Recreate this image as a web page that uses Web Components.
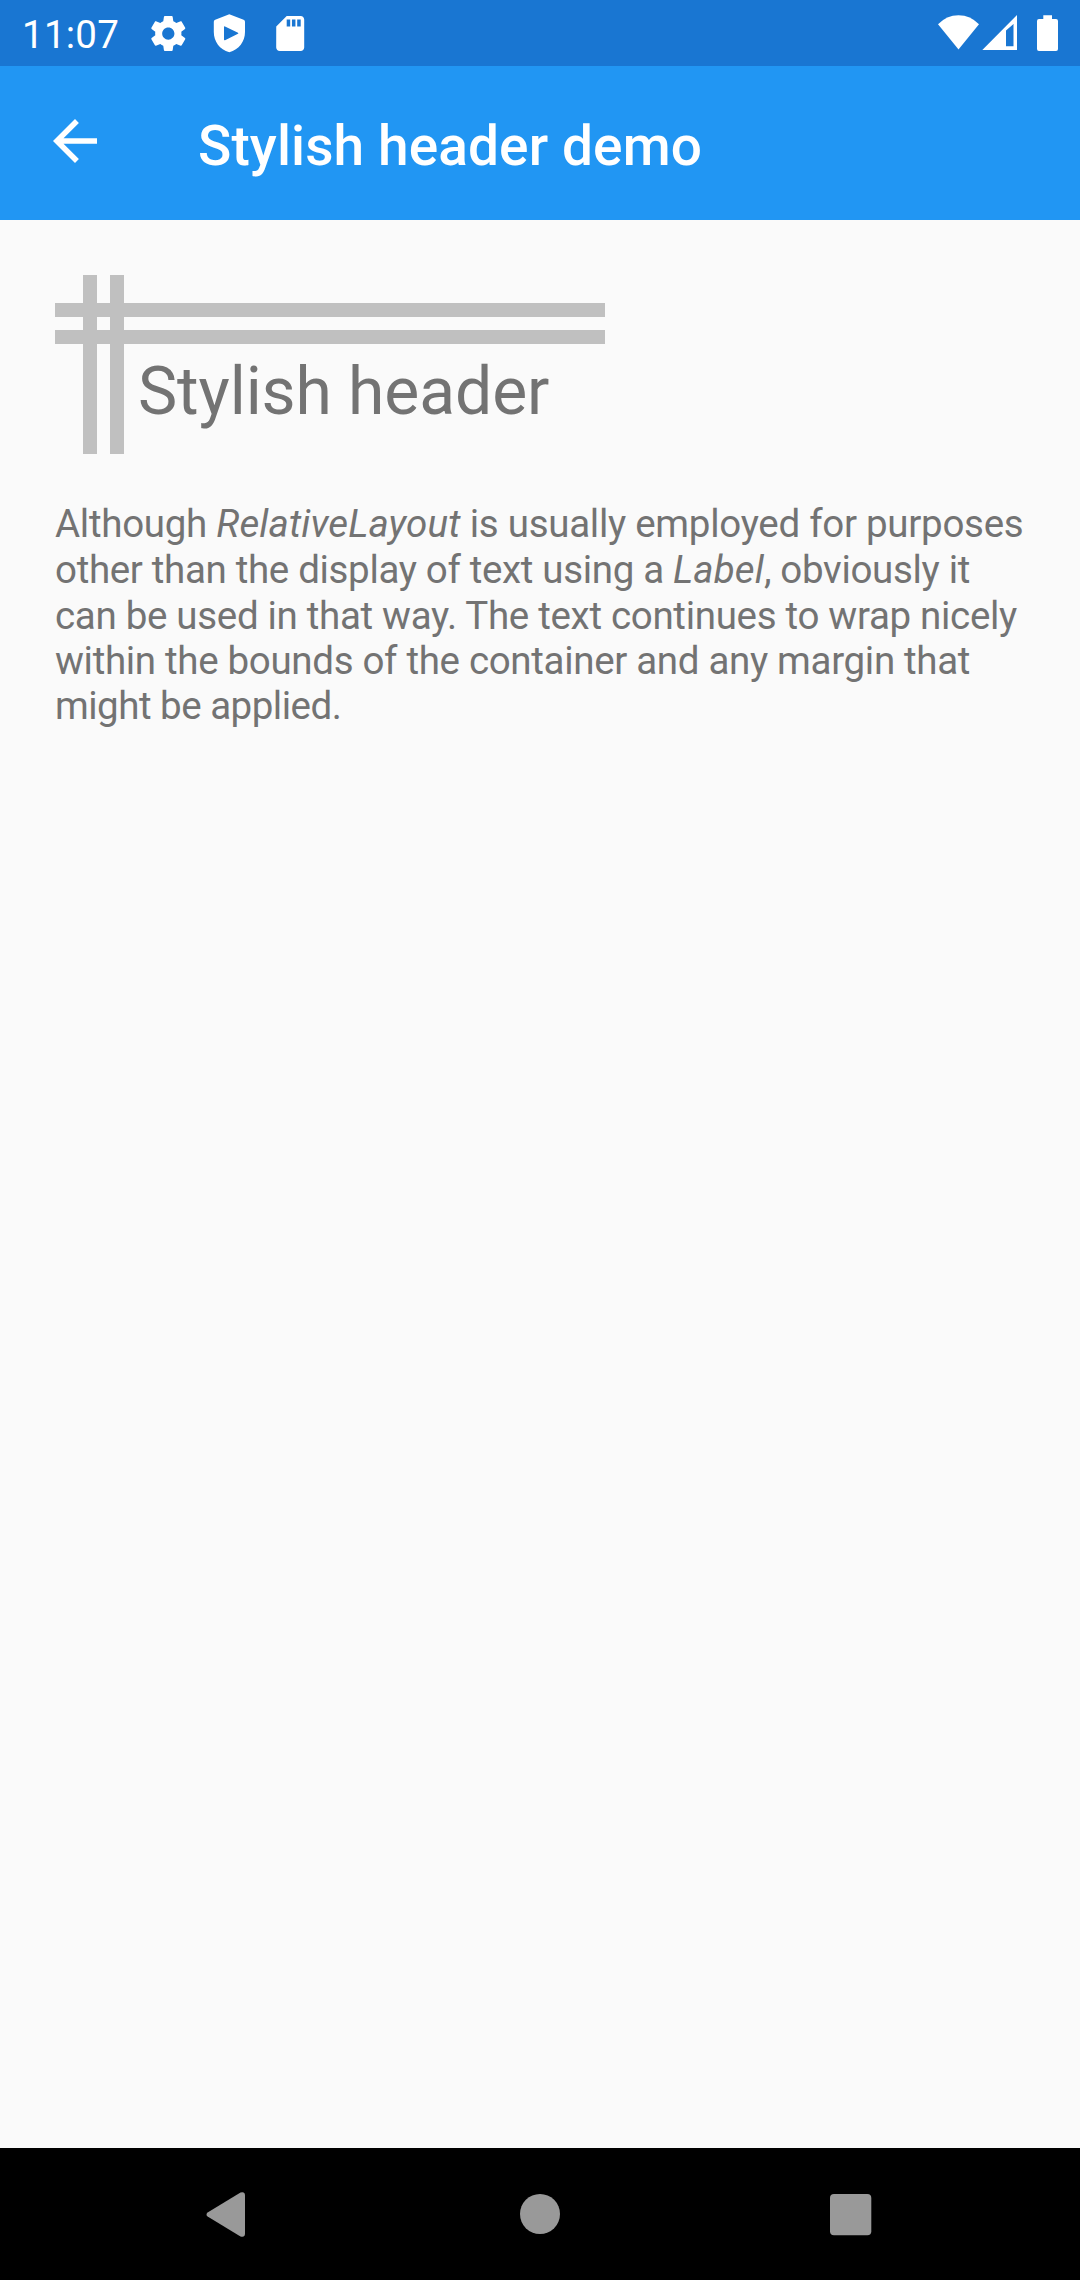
<!DOCTYPE html>
<html lang="en">
<head>
<meta charset="utf-8">
<title>Stylish header demo</title>
<style>
html,body{margin:0;height:100%}
body{font-family:Roboto,sans-serif;background:#fafafa}
text-line i{letter-spacing:.1px}
</style>
</head>
<body>
<demo-screen>
  <status-bar slot="status" time="11:07"></status-bar>
  <app-bar slot="bar">Stylish header demo</app-bar>
  <stylish-header>Stylish header</stylish-header>
  <body-label>
    <text-line style="height:46px;letter-spacing:-.28px">Although <i>RelativeLayout</i> is usually employed for purposes</text-line>
    <text-line style="height:46px;letter-spacing:-.33px">other than the display of text using a <i>Label</i>, obviously it</text-line>
    <text-line style="letter-spacing:-.31px">can be used in that way. The text continues to wrap nicely</text-line>
    <text-line style="letter-spacing:-.32px">within the bounds of the container and any margin that</text-line>
    <text-line style="letter-spacing:-.5px">might be applied.</text-line>
  </body-label>
  <nav-bar slot="nav"></nav-bar>
</demo-screen>
<script>
const define = (name, html, setup) => customElements.define(name, class extends HTMLElement {
  constructor() {
    super();
    this.attachShadow({mode: 'open'}).innerHTML = html;
  }
  connectedCallback() { if (setup) setup(this, this.shadowRoot); }
});

define('demo-screen', `
<style>
:host{display:flex;flex-direction:column;width:1080px;height:2280px;background:#fafafa;overflow:hidden}
main{flex:1;padding:55px 0 0 55px;display:flex;flex-direction:column;gap:47px;align-items:flex-start}
</style>
<slot name="status"></slot><slot name="bar"></slot>
<main><slot></slot></main>
<slot name="nav"></slot>`);

define('status-bar', `
<style>
:host{display:flex;box-sizing:border-box;height:66px;background:#1976d2;color:#fff;padding:0 18px 0 22px;justify-content:space-between}
.left,.right{display:flex}
.time{font-size:38.5px;line-height:45px;padding-top:12px;width:114px;margin-right:11px;white-space:nowrap;letter-spacing:.25px}
svg{display:block;fill:#fff}
</style>
<div class="left">
  <span class="time"></span>
  <svg width="170" height="66" viewBox="147 0 170 66">
    <path transform="translate(147.3 12.5) scale(1.75)" d="M19.43 12.98c.04-.32.07-.64.07-.98s-.03-.66-.07-.98l2.11-1.65c.19-.15.24-.42.12-.64l-2-3.46c-.12-.22-.39-.3-.61-.22l-2.49 1c-.52-.4-1.08-.73-1.69-.98l-.38-2.65C14.46 2.18 14.25 2 14 2h-4c-.25 0-.46.18-.49.42l-.38 2.65c-.61.25-1.17.59-1.69.98l-2.49-1c-.23-.09-.49 0-.61.22l-2 3.46c-.13.22-.07.49.12.64l2.11 1.65c-.04.32-.07.65-.07.98s.03.66.07.98l-2.11 1.65c-.19.15-.24.42-.12.64l2 3.46c.12.22.39.3.61.22l2.49-1c.52.4 1.08.73 1.69.98l.38 2.65c.03.24.24.42.49.42h4c.25 0 .46-.18.49-.42l.38-2.65c.61-.25 1.17-.59 1.69-.98l2.49 1c.23.09.49 0 .61-.22l2-3.46c.12-.22.07-.49-.12-.64l-2.11-1.65zM12 15.5c-1.93 0-3.5-1.57-3.5-3.5s1.57-3.5 3.5-3.5 3.5 1.57 3.5 3.5-1.57 3.5-3.5 3.5z"/>
    <path fill-rule="evenodd" d="M229.3 14.2L243.6 19.7Q245 20.3 245 21.8V32C245 41.5 239 49.5 229.3 52.3C219.6 49.5 213.8 41.5 213.8 32V21.8Q213.8 20.3 215.2 19.7ZM224 27V39.6Q224 40.6 225 40.2L238 33.8Q238.8 33.3 238 32.8L225 26.4Q224 26 224 27Z"/>
    <path transform="translate(269.2 12.5) scale(1.75)" d="M18 2h-8L4.02 8 4 20c0 1.100.9 2 2 2h12c1.100 0 2-.9 2-2V4c0-1.100-.9-2-2-2zm-6 6h-2V4h2v4zm3 0h-2V4h2v4zm3 0h-2V4h2v4z"/>
  </svg>
</div>
<div class="right">
  <svg width="130" height="66" viewBox="932 0 130 66">
    <path d="M958.5 49.5L938 24.3Q946.5 15.2 958.5 15.2T979 24.3Z"/>
    <path fill-rule="evenodd" d="M982.3 50L1017 15V50ZM1006 30.5V46.2H1013.5V24Z"/>
    <path d="M1043.3 15.2H1052V19H1056Q1058 19 1058 21V49Q1058 51 1056 51H1039Q1037 51 1037 49V21Q1037 19 1039 19H1043.3Z"/>
  </svg>
</div>`, (host, root) => { root.querySelector('.time').textContent = host.getAttribute('time'); });

define('app-bar', `
<style>
:host{display:flex;box-sizing:border-box;height:154px;background:#2196f3;color:#fff;padding-left:42px;align-items:flex-start}
svg{display:block;margin-top:42px;fill:#fff}
h1{margin:48px 0 0 90px;font-size:55px;line-height:65px;font-weight:500;white-space:nowrap;letter-spacing:.11px}
</style>
<svg width="66" height="66" viewBox="0 0 24 24"><path d="M20 11H7.830l5.590-5.590L12 4l-8 8 8 8 1.410-1.410L7.830 13H20v-2z"/></svg>
<h1><slot></slot></h1>`);

define('stylish-header', `
<style>
:host{display:grid;width:550px;height:179px;grid-template-columns:28px 14px 13px 14px 1fr;grid-template-rows:28px 14px 13px 14px 1fr}
i{background:#c0c0c0}
.h1{grid-area:2/1/3/-1}.h2{grid-area:4/1/5/-1}
.v1{grid-area:1/2/-1/3}.v2{grid-area:1/4/-1/5}
span{grid-area:5/5;padding:9px 0 0 14px;font-size:66px;line-height:78px;color:#737373;white-space:nowrap;letter-spacing:-.1px}
</style>
<i class="h1"></i><i class="h2"></i><i class="v1"></i><i class="v2"></i>
<span><slot></slot></span>`);

define('body-label', `
<style>:host{display:flex;flex-direction:column;font-size:38.5px;line-height:46px;color:#737373}</style>
<slot></slot>`);

define('text-line', `
<style>:host{display:block;height:45px;white-space:nowrap}</style>
<slot></slot>`);

define('nav-bar', `
<style>
:host{display:flex;height:132px;background:#000;justify-content:center}
svg{display:block;fill:#999}
</style>
<svg width="1080" height="132" viewBox="0 2148 1080 132">
  <path d="M207.6 2212.4L240.5 2192.6Q244.9 2191.2 245 2195.5V2233.5Q244.9 2237.8 240.5 2236.4L207.6 2216.6Q205.4 2214.5 207.6 2212.4Z"/>
  <circle cx="540" cy="2214" r="20"/>
  <rect x="830" y="2194" width="41.3" height="41.3" rx="4"/>
</svg>`);
</script>
</body>
</html>
